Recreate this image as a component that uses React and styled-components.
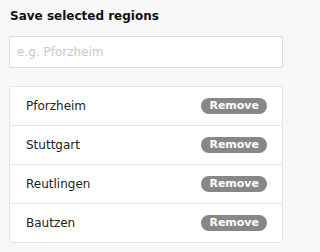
import React from 'react';
import styled, { createGlobalStyle } from 'styled-components';

const GlobalStyle = createGlobalStyle`
    html, body {
        margin: 0;
        padding: 0;
        background: #f8f8f8;
    }
    body {
        font-family: "DejaVu Sans", Verdana, sans-serif;
        color: #222;
    }
`;

const regions = ['Pforzheim', 'Stuttgart', 'Reutlingen', 'Bautzen'];

const App = () => {
    return (
        <>
            <GlobalStyle />
            <Panel>
                <Title>Save selected regions</Title>
                <SearchInput placeholder='e.g. Pforzheim' />
                <RegionList>
                    {regions.map((name) => (
                        <RegionRow key={name}>
                            <RegionName>{name}</RegionName>
                            <RemoveButton>Remove</RemoveButton>
                        </RegionRow>
                    ))}
                </RegionList>
            </Panel>
        </>
    );
}

export default App;

const Panel = styled.div`
    box-sizing: border-box;
    width: 291px;
    padding: 7px 8px 10px 9px;
    display: flex;
    flex-direction: column;
`;

const Title = styled.h2`
    margin: 0 0 11px 1px;
    font-size: 12px;
    font-weight: bold;
    line-height: 18px;
    color: #111;
`;

const SearchInput = styled.input`
    box-sizing: border-box;
    width: 100%;
    height: 32px;
    margin: 0;
    padding: 0 7px;
    border: 1px solid #dcdcdc;
    border-radius: 2px;
    background: #fff;
    font-family: inherit;
    font-size: 12px;
    color: #222;
    outline: none;

    &::placeholder {
        color: #c8c8c8;
    }
`;

const RegionList = styled.div`
    margin-top: 18px;
    background: #fff;
    border: 1px solid #e6e6e6;
    border-radius: 2px;
`;

const RegionRow = styled.div`
    display: flex;
    align-items: center;
    justify-content: space-between;
    height: 38px;
    padding: 0 15px 0 16px;

    & + & {
        border-top: 1px solid #e6e6e6;
    }
`;

const RegionName = styled.span`
    font-size: 12px;
    color: #222;
`;

const RemoveButton = styled.button`
    padding: 0 8px;
    height: 16px;
    border: none;
    border-radius: 8px;
    background: #878787;
    color: #fff;
    font-family: inherit;
    font-size: 11px;
    font-weight: bold;
    line-height: 16px;
    cursor: pointer;
`;
